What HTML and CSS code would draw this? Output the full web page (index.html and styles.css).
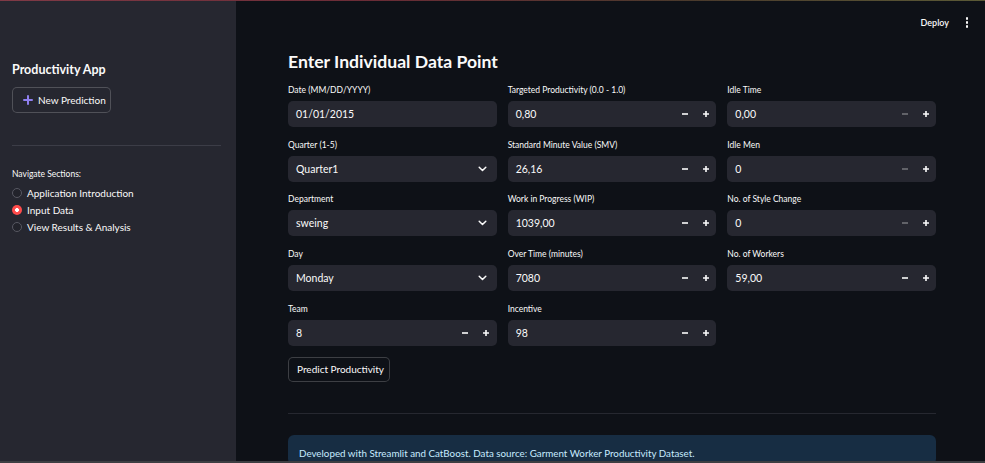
FILE: index.html
```html
<!DOCTYPE html>
<html lang="en">
<head>
<meta charset="utf-8">
<title>Productivity App</title>
<link rel="stylesheet" href="styles.css">
</head>
<body>
<div class="decor"></div>
<div class="app">
  <aside class="sidebar">
    <div class="app-title">Productivity App</div>
    <button class="btn new-btn">
      <svg class="plus-ic" width="10" height="10" viewBox="0 0 10 10"><path d="M5 1v8M1 5h8" stroke="#8f7fef" stroke-width="2" stroke-linecap="round"/></svg>
      <span>New Prediction</span>
    </button>
    <hr class="side-divider">
    <div class="nav-label">Navigate Sections:</div>
    <ul class="radios">
      <li><span class="radio"></span>Application Introduction</li>
      <li><span class="radio on"></span>Input Data</li>
      <li><span class="radio"></span>View Results &amp; Analysis</li>
    </ul>
  </aside>
  <main class="main">
    <header class="topbar">
      <span class="deploy">Deploy</span>
      <span class="kebab"><i></i><i></i><i></i></span>
    </header>
    <section class="content">
      <h1 class="title">Enter Individual Data Point</h1>
      <div class="grid">
        <div class="col">
          <div class="field">
            <label>Date (MM/DD/YYYY)</label>
            <div class="control"><span class="val">01/01/2015</span></div>
          </div>
          <div class="field">
            <label>Quarter (1-5)</label>
            <div class="control"><span class="val">Quarter1</span>
              <svg class="chev" width="9" height="6" viewBox="0 0 9 6"><path d="M1.2 1.2l3.3 3.3 3.3-3.3" fill="none" stroke="#fafafa" stroke-width="1.5" stroke-linecap="round" stroke-linejoin="round"/></svg></div>
          </div>
          <div class="field">
            <label>Department</label>
            <div class="control"><span class="val">sweing</span>
              <svg class="chev" width="9" height="6" viewBox="0 0 9 6"><path d="M1.2 1.2l3.3 3.3 3.3-3.3" fill="none" stroke="#fafafa" stroke-width="1.5" stroke-linecap="round" stroke-linejoin="round"/></svg></div>
          </div>
          <div class="field">
            <label>Day</label>
            <div class="control"><span class="val">Monday</span>
              <svg class="chev" width="9" height="6" viewBox="0 0 9 6"><path d="M1.2 1.2l3.3 3.3 3.3-3.3" fill="none" stroke="#fafafa" stroke-width="1.5" stroke-linecap="round" stroke-linejoin="round"/></svg></div>
          </div>
          <div class="field">
            <label>Team</label>
            <div class="control"><span class="val">8</span>
              <span class="step"><svg width="8" height="8" viewBox="0 0 8 8"><path d="M1 4h6" stroke="#fafafa" stroke-width="1.6"/></svg></span>
              <span class="step"><svg width="8" height="8" viewBox="0 0 8 8"><path d="M1 4h6M4 1v6" stroke="#fafafa" stroke-width="1.6"/></svg></span></div>
          </div>
        </div>
        <div class="col">
          <div class="field">
            <label>Targeted Productivity (0.0 - 1.0)</label>
            <div class="control"><span class="val">0,80</span>
              <span class="step"><svg width="8" height="8" viewBox="0 0 8 8"><path d="M1 4h6" stroke="#fafafa" stroke-width="1.6"/></svg></span>
              <span class="step"><svg width="8" height="8" viewBox="0 0 8 8"><path d="M1 4h6M4 1v6" stroke="#fafafa" stroke-width="1.6"/></svg></span></div>
          </div>
          <div class="field">
            <label>Standard Minute Value (SMV)</label>
            <div class="control"><span class="val">26,16</span>
              <span class="step"><svg width="8" height="8" viewBox="0 0 8 8"><path d="M1 4h6" stroke="#fafafa" stroke-width="1.6"/></svg></span>
              <span class="step"><svg width="8" height="8" viewBox="0 0 8 8"><path d="M1 4h6M4 1v6" stroke="#fafafa" stroke-width="1.6"/></svg></span></div>
          </div>
          <div class="field">
            <label>Work in Progress (WIP)</label>
            <div class="control"><span class="val">1039,00</span>
              <span class="step"><svg width="8" height="8" viewBox="0 0 8 8"><path d="M1 4h6" stroke="#fafafa" stroke-width="1.6"/></svg></span>
              <span class="step"><svg width="8" height="8" viewBox="0 0 8 8"><path d="M1 4h6M4 1v6" stroke="#fafafa" stroke-width="1.6"/></svg></span></div>
          </div>
          <div class="field">
            <label>Over Time (minutes)</label>
            <div class="control"><span class="val">7080</span>
              <span class="step"><svg width="8" height="8" viewBox="0 0 8 8"><path d="M1 4h6" stroke="#fafafa" stroke-width="1.6"/></svg></span>
              <span class="step"><svg width="8" height="8" viewBox="0 0 8 8"><path d="M1 4h6M4 1v6" stroke="#fafafa" stroke-width="1.6"/></svg></span></div>
          </div>
          <div class="field">
            <label>Incentive</label>
            <div class="control"><span class="val">98</span>
              <span class="step"><svg width="8" height="8" viewBox="0 0 8 8"><path d="M1 4h6" stroke="#fafafa" stroke-width="1.6"/></svg></span>
              <span class="step"><svg width="8" height="8" viewBox="0 0 8 8"><path d="M1 4h6M4 1v6" stroke="#fafafa" stroke-width="1.6"/></svg></span></div>
          </div>
        </div>
        <div class="col">
          <div class="field">
            <label>Idle Time</label>
            <div class="control"><span class="val">0,00</span>
              <span class="step dis"><svg width="8" height="8" viewBox="0 0 8 8"><path d="M1 4h6" stroke="#fafafa" stroke-width="1.6"/></svg></span>
              <span class="step"><svg width="8" height="8" viewBox="0 0 8 8"><path d="M1 4h6M4 1v6" stroke="#fafafa" stroke-width="1.6"/></svg></span></div>
          </div>
          <div class="field">
            <label>Idle Men</label>
            <div class="control"><span class="val">0</span>
              <span class="step dis"><svg width="8" height="8" viewBox="0 0 8 8"><path d="M1 4h6" stroke="#fafafa" stroke-width="1.6"/></svg></span>
              <span class="step"><svg width="8" height="8" viewBox="0 0 8 8"><path d="M1 4h6M4 1v6" stroke="#fafafa" stroke-width="1.6"/></svg></span></div>
          </div>
          <div class="field">
            <label>No. of Style Change</label>
            <div class="control"><span class="val">0</span>
              <span class="step dis"><svg width="8" height="8" viewBox="0 0 8 8"><path d="M1 4h6" stroke="#fafafa" stroke-width="1.6"/></svg></span>
              <span class="step"><svg width="8" height="8" viewBox="0 0 8 8"><path d="M1 4h6M4 1v6" stroke="#fafafa" stroke-width="1.6"/></svg></span></div>
          </div>
          <div class="field">
            <label>No. of Workers</label>
            <div class="control"><span class="val">59,00</span>
              <span class="step"><svg width="8" height="8" viewBox="0 0 8 8"><path d="M1 4h6" stroke="#fafafa" stroke-width="1.6"/></svg></span>
              <span class="step"><svg width="8" height="8" viewBox="0 0 8 8"><path d="M1 4h6M4 1v6" stroke="#fafafa" stroke-width="1.6"/></svg></span></div>
          </div>
        </div>
      </div>
      <button class="btn predict-btn">Predict Productivity</button>
      <hr class="main-divider">
      <div class="info">Developed with Streamlit and CatBoost. Data source: Garment Worker Productivity Dataset.</div>
    </section>
  </main>
</div>
<div class="bottom-strip"></div>
</body>
</html>
```

FILE: styles.css
```css
* { box-sizing: border-box; }
html, body { margin: 0; padding: 0; }
body {
  width: 985px;
  height: 463px;
  overflow: hidden;
  background: #0e1117;
  color: #fafafa;
  font-family: Lato, "Liberation Sans", sans-serif;
  display: flex;
  flex-direction: column;
}
.decor {
  height: 1px;
  flex: none;
  background: linear-gradient(90deg, #803a46 0%, #6a2c36 38%, #4a3a2c 70%, #5b5a36 100%);
}
.app { flex: 1; display: flex; min-height: 0; }
.bottom-strip { height: 2px; flex: none; background: #3d3e42; }

/* sidebar */
.sidebar {
  width: 236px;
  flex: none;
  background: #262730;
  padding: 62px 15px 0 12px;
}
.app-title {
  font-size: 12.5px;
  font-weight: 700;
  line-height: 14px;
  margin-bottom: 10px;
}
.btn {
  font-family: inherit;
  color: #fafafa;
  border: 1px solid rgba(250, 250, 250, 0.2);
  border-radius: 5px;
  cursor: pointer;
  display: flex;
  align-items: center;
}
.new-btn {
  height: 26px;
  width: 99px;
  padding: 0 0 0 10px;
  gap: 5px;
  background: #262730;
  font-size: 10px;
}
.plus-ic { flex: none; }
.side-divider {
  border: 0;
  height: 1px;
  background: #3c3d47;
  margin: 32px 0 0 0;
}
.nav-label {
  font-size: 8.5px;
  line-height: 12px;
  margin-top: 22px;
}
.radios {
  list-style: none;
  margin: 4px 0 0 0;
  padding: 0;
}
.radios li {
  display: flex;
  align-items: center;
  gap: 5px;
  height: 17px;
  font-size: 10px;
}
.radio {
  width: 10px;
  height: 10px;
  border-radius: 50%;
  border: 1px solid #575862;
  background: #22232b;
  flex: none;
}
.radio.on {
  border: 0;
  background: radial-gradient(circle, #ffffff 0 1.7px, #ff4b4b 2.2px);
}

/* main */
.main { flex: 1; display: flex; flex-direction: column; min-width: 0; }
.topbar {
  height: 43px;
  flex: none;
  display: flex;
  justify-content: flex-end;
  align-items: center;
  gap: 16px;
  padding-right: 16px;
}
.deploy { font-size: 9px; font-weight: 600; }
.kebab { display: flex; flex-direction: column; gap: 1.6px; width: 4px; align-items: center; }
.kebab i { display: block; width: 2.4px; height: 2.4px; border-radius: 50%; background: #fafafa; }

.content { padding: 6px 49px 0 52px; }
.title {
  margin: 0;
  font-size: 17.6px;
  font-weight: 700;
  line-height: 24px;
}
.grid {
  margin-top: 10px;
  display: grid;
  grid-template-columns: repeat(3, 1fr);
  column-gap: 11px;
  align-items: start;
}
.col { display: flex; flex-direction: column; gap: 11.7px; }
.field label {
  display: block;
  font-size: 8.5px;
  line-height: 12px;
  margin-bottom: 5px;
}
.control {
  height: 26px;
  background: #262730;
  border-radius: 5px;
  display: flex;
  align-items: center;
  padding-left: 8px;
}
.val { flex: 1; font-size: 10.5px; }
.chev { margin-right: 10px; flex: none; }
.step {
  width: 21px;
  height: 26px;
  display: flex;
  align-items: center;
  justify-content: center;
  flex: none;
}
.step.dis svg { opacity: 0.35; }

.predict-btn {
  margin-top: 11px;
  height: 25px;
  width: 102px;
  padding: 0 0 0 8px;
  background: #0e1117;
  font-size: 10px;
}
.main-divider {
  border: 0;
  height: 1px;
  background: #262830;
  margin: 31px 0 0 0;
}
.info {
  margin-top: 21px;
  background: #172d43;
  color: #c7ebff;
  border-radius: 6px;
  padding: 12px 11px 6px;
  font-size: 9.8px;
  line-height: 12px;
}
```
